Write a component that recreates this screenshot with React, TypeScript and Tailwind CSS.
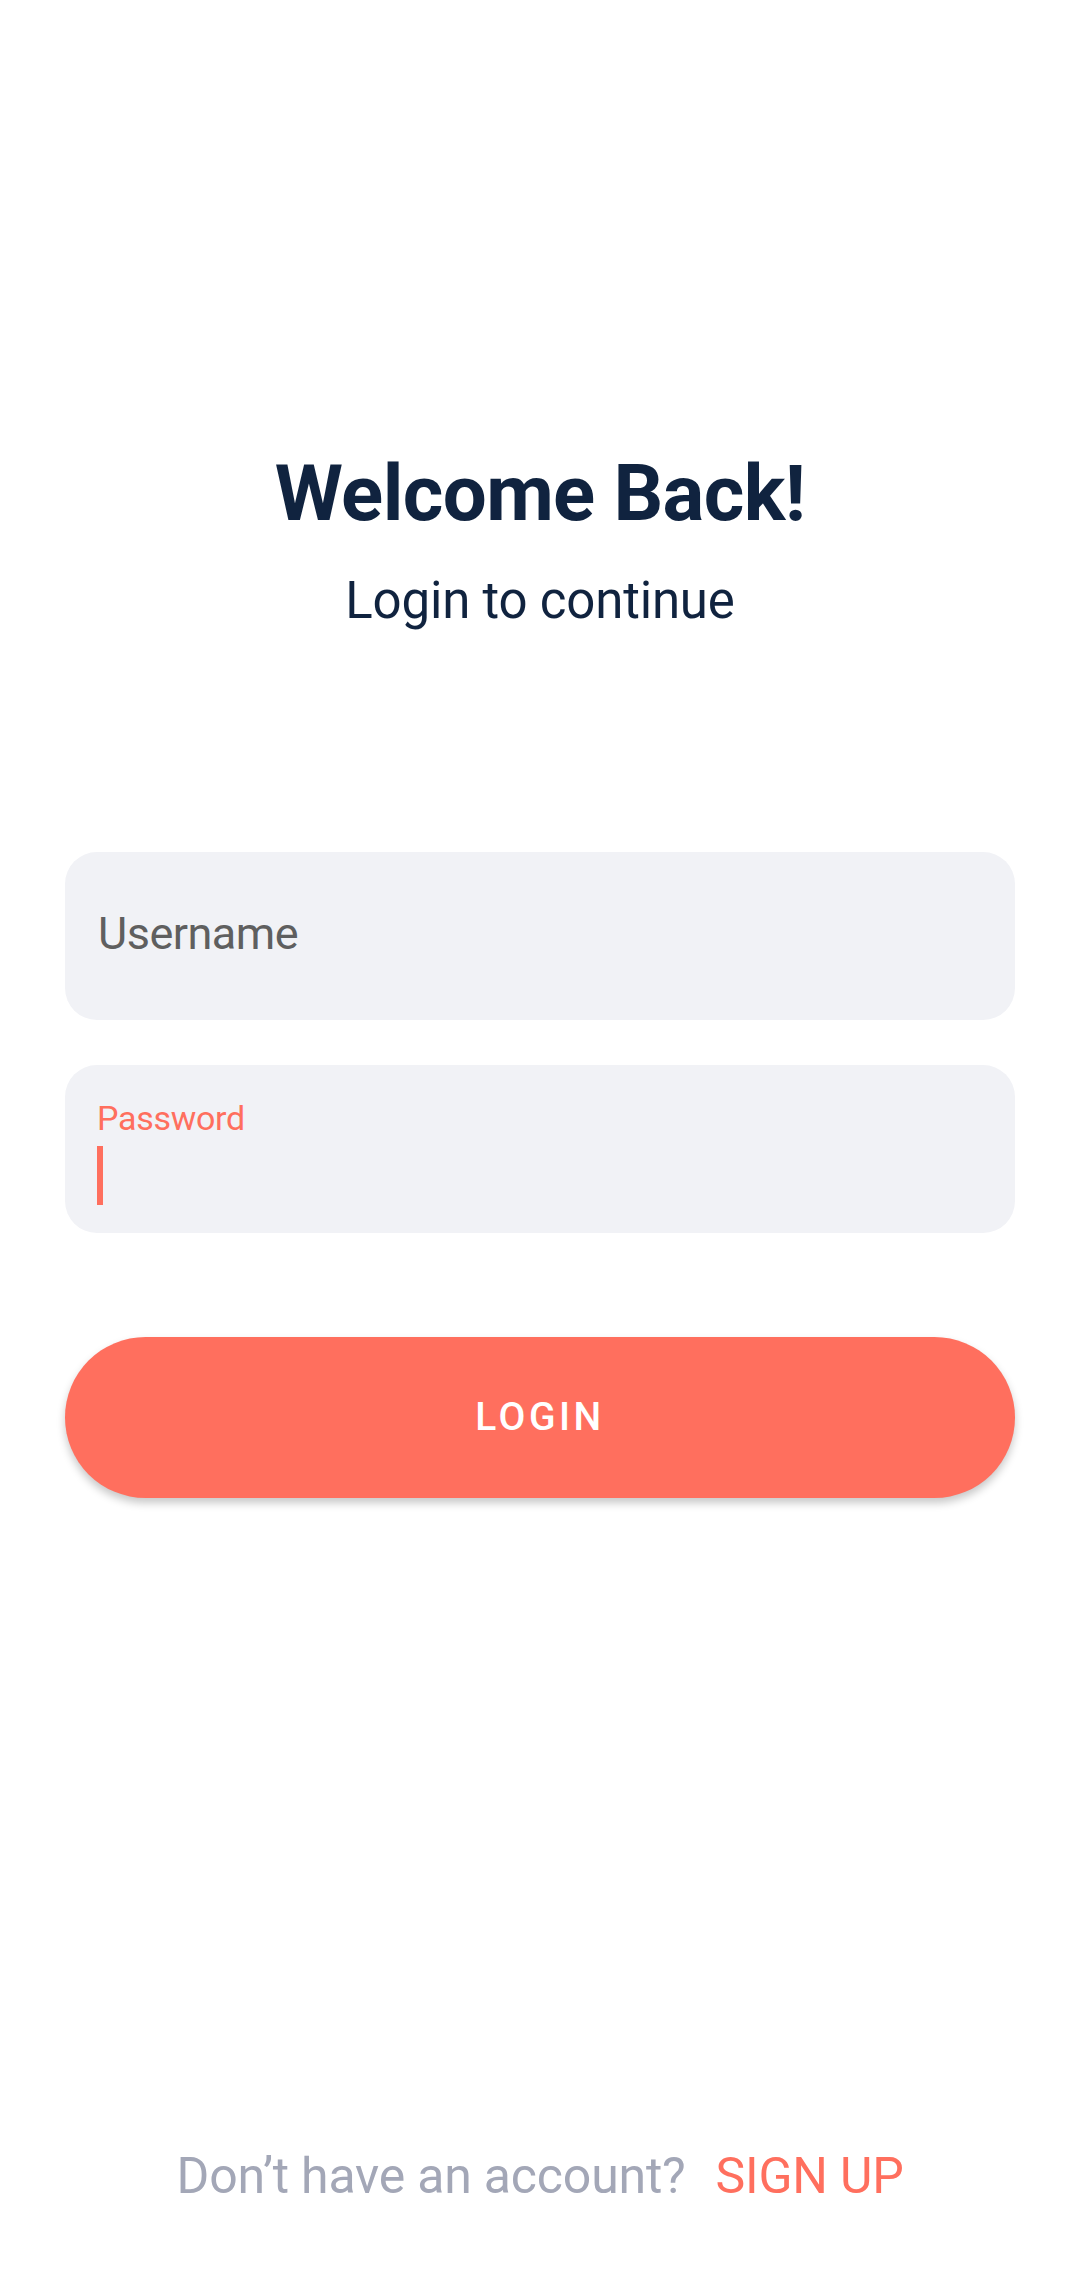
import { useState } from 'react';

export default function App() {
  const [username, setUsername] = useState('');
  const [password, setPassword] = useState('');

  return (
    <div className="flex h-[2280px] w-full flex-col bg-white font-['Roboto',sans-serif]">
      {/* heading */}
      <div className="flex flex-col items-center pt-[446px]">
        <h1 className="text-[78px] font-bold leading-[96px] tracking-[-0.6px] text-[#10233f]">Welcome Back!</h1>
        <p className="mt-[28px] text-[51px] leading-[62px] tracking-[-0.2px] text-[#10233f]">Login to continue</p>
      </div>

      {/* form */}
      <div className="mx-[65px] mt-[220px] flex flex-col">
        <label className="block h-[168px] rounded-[32px] bg-[#f1f2f6] px-[33px] pt-[55px]">
          <input
            value={username}
            onChange={(e) => setUsername(e.target.value)}
            placeholder="Username"
            className="w-full bg-transparent text-[45px] leading-[54px] tracking-[-0.5px] text-[#5f5f5f] placeholder:text-[#5f5f5f] outline-none"
          />
        </label>

        <div className="mt-[45px] h-[168px] rounded-[32px] bg-[#f1f2f6] px-[32px] pt-[33px]">
          <div className="text-[34px] leading-[40px] tracking-[-0.3px] text-[#ff6f5e]">Password</div>
          <div className="mt-[4px] flex items-center">
            <div className="h-[59px] w-[6px] bg-[#ff6f5e]" />
            <input
              type="password"
              value={password}
              onChange={(e) => setPassword(e.target.value)}
              className="w-full bg-transparent text-[45px] outline-none"
            />
          </div>
        </div>

        <button className="mt-[104px] flex h-[161px] w-full items-center justify-center rounded-full bg-[#ff6f5e] text-[39px] font-medium tracking-[3.5px] text-white shadow-[0_5px_8px_rgba(0,0,0,0.22)]">
          LOGIN
        </button>
      </div>

      {/* footer */}
      <div className="mt-auto flex items-center justify-center pb-[74px] text-[50px] leading-[60px] tracking-[-0.2px]">
        <span className="text-[#a3a7b7]">Don’t have an account?</span>
        <span className="ml-[30px] text-[#ff6f5e]">SIGN UP</span>
      </div>
    </div>
  );
}
